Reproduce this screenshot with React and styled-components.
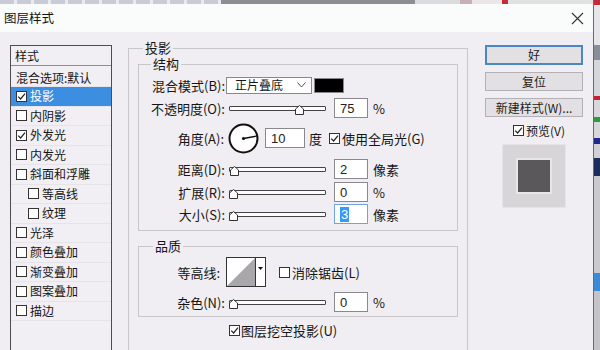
import React from "react";
import styled, { createGlobalStyle } from "styled-components";

const GlobalStyle = createGlobalStyle`
  html, body { margin: 0; padding: 0; background: #f0eef2; }
  body {
    font-family: "Noto Sans CJK SC", "Noto Sans", sans-serif;
    font-size: 13px;
    color: #151515;
  }
  * { box-sizing: border-box; }
`;

const Page = styled.div`
  width: 600px;
  height: 350px;
  overflow: hidden;
  display: flex;
  background: #f0eef2;
`;

const LeftSide = styled.div`
  width: 593px;
  display: flex;
  flex-direction: column;
`;

const TopStrip = styled.div`
  height: 4px;
  flex: none;
  display: flex;
`;

const StripPart = styled.div`
  width: ${(p) => p.$w}px;
  background: ${(p) => p.$c};
`;

const SideStrip = styled.div`
  width: 7px;
  display: flex;
  flex-direction: column;
  border-left: 1px solid #6a6a70;
`;

const SidePart = styled.div`
  height: ${(p) => p.$h}px;
  flex: none;
  background: ${(p) => p.$c};
`;

const TitleBar = styled.div`
  height: 28px;
  flex: none;
  background: #fafcfc;
  display: flex;
  align-items: center;
  justify-content: space-between;
  padding: 0 9px 0 4px;
`;

const Title = styled.span`
  font-size: 12.5px;
  line-height: 14px;
  color: #111;
`;

const Body = styled.div`
  flex: 1;
  min-height: 0;
  overflow: hidden;
  display: flex;
  align-items: flex-start;
  padding-left: 10px;
  background: #f0eef2;
`;

/* ---- left style list ---- */

const StyleList = styled.div`
  margin-top: 13px;
  width: 102px;
  height: 330px;
  flex: none;
  border: 1px solid #4e4c50;
  background: #f1eff3;
  display: flex;
  flex-direction: column;
`;

const ListHeader = styled.div`
  height: 20px;
  flex: none;
  padding-left: 4px;
  border-bottom: 1px solid #8e8c90;
  font-size: 12px;
  line-height: 20px;
`;

const ListItem = styled.div`
  height: ${(p) => p.$h || 19.5}px;
  flex: none;
  display: flex;
  align-items: center;
  gap: 3px;
  padding-left: ${(p) => (p.$indent ? 17 : 5)}px;
  padding-top: ${(p) => p.$pt || 0}px;
  font-size: 12px;
  line-height: 14px;
  white-space: nowrap;
  border-bottom: 1px solid #e6e4e8;
  background: ${(p) => (p.$selected ? "#3c8ee0" : "transparent")};
  color: ${(p) => (p.$selected ? "#fff" : "#151515")};
`;

/* ---- shared controls ---- */

const Box = styled.span`
  width: 11px;
  height: 11px;
  flex: none;
  border: 1px solid #333;
  background: #fff;
  display: inline-flex;
  margin-left: ${(p) => p.$ml || 0}px;
`;

function Check({ checked, ml }) {
  return (
    <Box $ml={ml}>
      {checked && (
        <svg width="9" height="9" viewBox="0 0 9 9">
          <path d="M1.2 4.6 L3.6 7 L8 1.6" fill="none" stroke="#222" strokeWidth="1.2" />
        </svg>
      )}
    </Box>
  );
}

const Text = styled.span`
  margin-left: ${(p) => p.$ml || 0}px;
  font-size: ${(p) => p.$size || 13}px;
  line-height: 15px;
  white-space: nowrap;
`;

/* ---- main panel ---- */

const MainPanel = styled.fieldset`
  margin: 9px 0 0 16px;
  padding: 0;
  width: 340px;
  height: 330px;
  flex: none;
  border: 1px solid #c9c6ca;
  min-width: 0;
`;

const Group = styled.fieldset`
  margin: ${(p) => p.$mt}px 9px 0;
  padding: ${(p) => p.$pt || 0}px 0 ${(p) => p.$pb}px;
  border: 1px solid #c9c6ca;
  min-width: 0;
`;

const Legend = styled.legend`
  margin-left: ${(p) => p.$ml}px;
  padding: 0 2px;
  font-size: 13px;
  line-height: 14px;
`;

const Row = styled.div`
  height: ${(p) => p.$h}px;
  display: flex;
  align-items: center;
  padding-left: ${(p) => p.$pl || 0}px;
`;

const Label = styled.span`
  width: ${(p) => p.$w}px;
  margin-right: ${(p) => p.$gap}px;
  text-align: right;
  font-size: 13px;
  line-height: 15px;
  white-space: nowrap;
  flex: none;
`;

const Select = styled.div`
  width: 86px;
  height: 17px;
  border: 1px solid #8a888c;
  background: #fff;
  display: flex;
  align-items: center;
  justify-content: space-between;
  padding: 0 5px 0 8px;
  font-size: 12px;
  line-height: 14px;
`;

const Swatch = styled.div`
  width: 30px;
  height: 15px;
  margin-left: 2px;
  background: #000;
  border: 1px solid #8a888c;
`;

const SliderWrap = styled.div`
  position: relative;
  width: 97px;
  height: 20px;
  margin-right: 8px;
  display: flex;
  align-items: center;
  flex: none;
`;

const Track = styled.div`
  width: 100%;
  height: 5px;
  border: 1px solid #444;
  background: #fdfdfd;
  border-radius: 1px;
`;

const Handle = styled.svg`
  position: absolute;
  top: 7px;
  width: 9px;
  height: 10px;
`;

function Slider({ pct }) {
  const left = 4 + (pct / 100) * 89 - 4.5;
  return (
    <SliderWrap>
      <Track />
      <Handle viewBox="0 0 9 10" style={{ left }}>
        <polygon points="0.5,4 4.5,0.5 8.5,4 8.5,9.5 0.5,9.5" fill="#fff" stroke="#333" strokeWidth="1" />
      </Handle>
    </SliderWrap>
  );
}

const Input = styled.div`
  width: ${(p) => p.$w || 34}px;
  height: 20px;
  margin-left: ${(p) => p.$ml || 0}px;
  border: 1px solid ${(p) => (p.$focus ? "#6fa5d8" : "#8a888c")};
  background: #fff;
  padding-left: 5px;
  display: flex;
  align-items: center;
  font-family: "Liberation Sans", "DejaVu Sans", sans-serif;
  font-size: 13px;
  color: #222;
  flex: none;
`;

const Selected = styled.span`
  background: #3399ff;
  color: #fff;
  padding: 0 1px;
  line-height: 15px;
`;

const Dial = styled.svg`
  width: 31px;
  height: 31px;
  flex: none;
`;

const Contour = styled.div`
  width: 40px;
  height: 30px;
  border: 1px solid #333;
  display: flex;
  background: #fff;
  flex: none;
`;

const ContourArrow = styled.div`
  width: 10px;
  border-left: 1px solid #333;
  display: flex;
  justify-content: center;
  padding-top: 9px;
`;

/* ---- right column ---- */

const RightCol = styled.div`
  margin-left: 17px;
  width: 98px;
  flex: none;
  padding-top: 13px;
  display: flex;
  flex-direction: column;
`;

const Button = styled.div`
  height: ${(p) => (p.$primary ? 20 : 19)}px;
  margin-top: ${(p) => p.$mt || 0}px;
  border: ${(p) => (p.$primary ? "2px solid #4a88c4" : "1px solid #b3b1b5")};
  background: #e2e0e3;
  display: flex;
  align-items: center;
  justify-content: center;
  font-size: 12px;
  line-height: 14px;
  color: #222;
`;

const PreviewRow = styled.div`
  height: 18px;
  margin-top: 4px;
  padding-left: 28px;
  display: flex;
  align-items: center;
`;

const PreviewBox = styled.div`
  width: 64px;
  height: 64px;
  margin: 5px 0 0 17px;
  background: #d8d5d8;
  border: 1px solid #e6e4e7;
  display: flex;
  align-items: center;
  justify-content: center;
`;

const PreviewSquare = styled.div`
  width: 32px;
  height: 32px;
  background: #5a585a;
  box-shadow: 0 0 0 2px #e9e6e9;
`;

const styles = [
  { name: "投影", checked: true, selected: true },
  { name: "内阴影" },
  { name: "外发光", checked: true },
  { name: "内发光" },
  { name: "斜面和浮雕" },
  { name: "等高线", indent: true },
  { name: "纹理", indent: true },
  { name: "光泽" },
  { name: "颜色叠加" },
  { name: "渐变叠加" },
  { name: "图案叠加" },
  { name: "描边" },
];

const sliders = [
  { label: "距离(D):", pct: 2, value: "2", unit: "像素", h: 24 },
  { label: "扩展(R):", pct: 0, value: "0", unit: "%", h: 22 },
  { label: "大小(S):", pct: 1, value: "3", unit: "像素", h: 22, focus: true },
];

export default function App() {
  return (
    <>
      <GlobalStyle />
      <Page>
        <LeftSide>
          <TopStrip>
            <StripPart $w={221} $c="repeating-linear-gradient(90deg,#c9ccd6 0 14px,#e8eaf0 14px 17px)" />
            <StripPart $w={194} $c="#8e8d95" />
            <StripPart $w={45} $c="#dcdce0" />
            <StripPart $w={12} $c="#c9b0b4" />
            <StripPart $w={30} $c="#ece6e8" />
            <StripPart $w={6} $c="#c42b36" />
            <StripPart $w={85} $c="#e1e1e4" />
          </TopStrip>
          <TitleBar>
            <Title>图层样式</Title>
            <svg width="13" height="13" viewBox="0 0 13 13">
              <path d="M1 1 L12 12 M12 1 L1 12" stroke="#333" strokeWidth="1.1" />
            </svg>
          </TitleBar>
          <Body>
            <StyleList>
              <ListHeader>样式</ListHeader>
              <ListItem $h={21} $pt={3}>混合选项:默认</ListItem>
              {styles.map((s) => (
                <ListItem key={s.name} $indent={s.indent} $selected={s.selected}>
                  <Check checked={s.checked} />
                  {s.name}
                </ListItem>
              ))}
            </StyleList>

            <MainPanel>
              <Legend $ml={14}>投影</Legend>
              <Group $mt={2} $pt={2} $pb={5}>
                <Legend $ml={12}>结构</Legend>
                <Row $h={24}>
                  <Label $w={86} $gap={1}>混合模式(B):</Label>
                  <Select>
                    正片叠底
                    <svg width="9" height="6" viewBox="0 0 9 6">
                      <path d="M0.5 0.5 L4.5 5 L8.5 0.5" fill="none" stroke="#555" strokeWidth="1" />
                    </svg>
                  </Select>
                  <Swatch />
                </Row>
                <Row $h={22}>
                  <Label $w={86} $gap={4}>不透明度(O):</Label>
                  <Slider pct={75} />
                  <Input>75</Input>
                  <Text $ml={5}>%</Text>
                </Row>
                <Row $h={38}>
                  <Label $w={85} $gap={4}>角度(A):</Label>
                  <Dial viewBox="0 0 31 31">
                    <circle cx="15.5" cy="15.5" r="14" fill="#fff" stroke="#111" strokeWidth="2" />
                    <line x1="15.5" y1="15.5" x2="28.3" y2="13.2" stroke="#111" strokeWidth="1.3" />
                    <circle cx="15.5" cy="15.5" r="1.6" fill="#111" />
                  </Dial>
                  <Input $w={40} $ml={6}>10</Input>
                  <Text $ml={4}>度</Text>
                  <Check checked ml={7} />
                  <Text $ml={2}>使用全局光(G)</Text>
                </Row>
                {sliders.map((s) => (
                  <Row key={s.label} $h={s.h}>
                    <Label $w={86} $gap={4}>{s.label}</Label>
                    <Slider pct={s.pct} />
                    <Input $focus={s.focus}>
                      {s.focus ? <Selected>{s.value}</Selected> : s.value}
                    </Input>
                    <Text $ml={5}>{s.unit}</Text>
                  </Row>
                ))}
              </Group>

              <Group $mt={8} $pb={3}>
                <Legend $ml={14}>品质</Legend>
                <Row $h={38}>
                  <Label $w={81} $gap={6}>等高线:</Label>
                  <Contour>
                    <svg width="28" height="28" viewBox="0 0 28 28">
                      <polygon points="0,28 28,0 28,28" fill="#a9a7aa" />
                    </svg>
                    <ContourArrow>
                      <svg width="5" height="3" viewBox="0 0 5 3">
                        <polygon points="0,0 5,0 2.5,3" fill="#111" />
                      </svg>
                    </ContourArrow>
                  </Contour>
                  <Check ml={13} />
                  <Text $ml={2}>消除锯齿(L)</Text>
                </Row>
                <Row $h={22}>
                  <Label $w={86} $gap={4}>杂色(N):</Label>
                  <Slider pct={0} />
                  <Input>0</Input>
                  <Text $ml={5}>%</Text>
                </Row>
              </Group>

              <Row $h={27} $pl={100}>
                <Check checked />
                <Text $ml={1}>图层挖空投影(U)</Text>
              </Row>
            </MainPanel>

            <RightCol>
              <Button $primary>好</Button>
              <Button $mt={7}>复位</Button>
              <Button $mt={7}>新建样式(W)...</Button>
              <PreviewRow>
                <Check checked />
                <Text $ml={2} $size={12}>预览(V)</Text>
              </PreviewRow>
              <PreviewBox>
                <PreviewSquare />
              </PreviewBox>
            </RightCol>
          </Body>
        </LeftSide>
        <SideStrip>
          <SidePart $h={5} $c="#c42b36" />
          <SidePart $h={40} $c="#e6e6ea" />
          <SidePart $h={15} $c="#8a8e9a" />
          <SidePart $h={36} $c="#d4d6dc" />
          <SidePart $h={4} $c="#c4202e" />
          <SidePart $h={17} $c="#d8d8dc" />
          <SidePart $h={5} $c="#2e9a3e" />
          <SidePart $h={16} $c="#d8d8dc" />
          <SidePart $h={6} $c="#1c2a8a" />
          <SidePart $h={14} $c="#d0d0d6" />
          <SidePart $h={18} $c="#1e2c5a" />
          <SidePart $h={97} $c="#c9c9ce" />
          <SidePart $h={18} $c="#3a8ad8" />
          <SidePart $h={59} $c="#c4c4c9" />
        </SideStrip>
      </Page>
    </>
  );
}
